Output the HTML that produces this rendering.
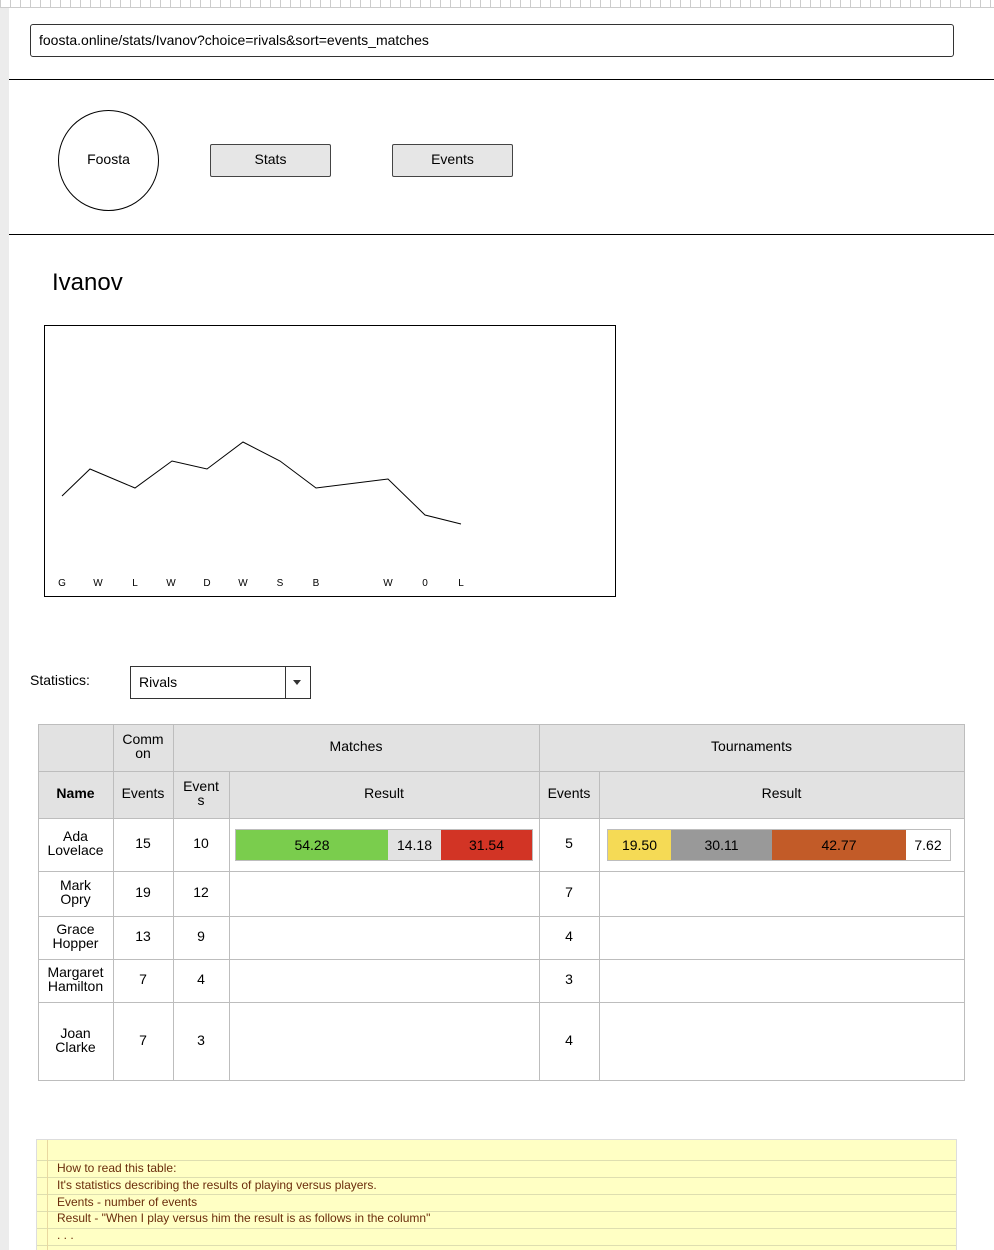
<!DOCTYPE html>
<html><head><style>
*{margin:0;padding:0;box-sizing:border-box}
body{width:994px;height:1250px;position:relative;background:#fff;font-family:"Liberation Sans",Arial,sans-serif;color:#000;overflow:hidden}
.a{position:absolute}
.c{position:absolute;display:flex;align-items:center;justify-content:center;text-align:center;font-size:14px;line-height:14px;padding-bottom:3px}
.h{background:#e2e2e2}
.vl{position:absolute;width:1px;background:#bdbdbd}
.hl{position:absolute;height:1px;background:#bdbdbd}
</style></head><body>
<div class="a" style="left:0;top:0;width:994px;height:8px;background:repeating-linear-gradient(90deg,#ccc 0 1px,#fff 1px 10px);border-bottom:1px solid #ccc"></div>
<div class="a" style="left:0;top:8px;width:9px;height:1242px;background:#ececec"></div>
<div class="a" style="left:30px;top:24px;width:924px;height:33px;border:1px solid #333;border-radius:3px;font-size:14px;padding:7px 8px">foosta.online/stats/Ivanov?choice=rivals&amp;sort=events_matches</div>
<div class="a" style="left:9px;top:79px;width:985px;height:1px;background:#000"></div>
<div class="a" style="left:9px;top:234px;width:985px;height:1px;background:#000"></div>
<div class="c" style="left:58px;top:110px;width:101px;height:101px;border:1px solid #000;border-radius:50%">Foosta</div>
<div class="c" style="left:210px;top:144px;width:121px;height:33px;border:1px solid #444;background:#e6e6e6;border-radius:2px">Stats</div>
<div class="c" style="left:392px;top:144px;width:121px;height:33px;border:1px solid #444;background:#e6e6e6;border-radius:2px">Events</div>
<div class="a" style="left:52px;top:269px;font-size:24px">Ivanov</div>
<div class="a" style="left:44px;top:325px;width:572px;height:272px;border:1px solid #000"></div>
<svg class="a" style="left:0;top:0" width="994" height="700">
<polyline points="62,496 90,469 135,488 172,461 207,469 243,442 280,461 316,488 388,479 425,515 461,524" fill="none" stroke="#000" stroke-width="1"/>
<g font-size="10" font-family="Liberation Sans" text-anchor="middle">
<text x="62" y="586">G</text><text x="98" y="586">W</text><text x="135" y="586">L</text><text x="171" y="586">W</text><text x="207" y="586">D</text><text x="243" y="586">W</text><text x="280" y="586">S</text><text x="316" y="586">B</text><text x="388" y="586">W</text><text x="425" y="586">0</text><text x="461" y="586">L</text>
</g></svg>
<div class="a" style="left:30px;top:672px;font-size:14px">Statistics:</div>
<div class="a" style="left:130px;top:666px;width:181px;height:33px;border:1px solid #333;font-size:14px;padding:7px 8px">Rivals</div>
<div class="a" style="left:285px;top:667px;width:1px;height:31px;background:#333"></div>
<div class="a" style="left:293px;top:680px;width:0;height:0;border-left:4px solid transparent;border-right:4px solid transparent;border-top:5px solid #333"></div>
<div class="a h" style="left:38px;top:724px;width:926px;height:94px"></div>
<div class="a" style="left:38px;top:724px;width:927px;height:357px;border:1px solid #bdbdbd"></div>
<div class="vl" style="left:113px;top:724px;height:357px"></div>
<div class="vl" style="left:173px;top:724px;height:357px"></div>
<div class="vl" style="left:229px;top:771px;height:310px"></div>
<div class="vl" style="left:539px;top:724px;height:357px"></div>
<div class="vl" style="left:599px;top:771px;height:310px"></div>
<div class="hl" style="left:38px;top:771px;width:926px"></div>
<div class="hl" style="left:38px;top:818px;width:926px"></div>
<div class="hl" style="left:38px;top:871px;width:926px"></div>
<div class="hl" style="left:38px;top:916px;width:926px"></div>
<div class="hl" style="left:38px;top:959px;width:926px"></div>
<div class="hl" style="left:38px;top:1002px;width:926px"></div>
<div class="c" style="left:113px;top:724px;width:60px;height:47px">Comm<br>on</div>
<div class="c" style="left:173px;top:724px;width:366px;height:47px">Matches</div>
<div class="c" style="left:539px;top:724px;width:425px;height:47px">Tournaments</div>
<div class="c" style="left:38px;top:771px;width:75px;height:47px;font-weight:bold">Name</div>
<div class="c" style="left:113px;top:771px;width:60px;height:47px">Events</div>
<div class="c" style="left:173px;top:771px;width:56px;height:47px">Event<br>s</div>
<div class="c" style="left:229px;top:771px;width:310px;height:47px">Result</div>
<div class="c" style="left:539px;top:771px;width:60px;height:47px">Events</div>
<div class="c" style="left:599px;top:771px;width:365px;height:47px">Result</div>
<div class="c" style="left:38px;top:818px;width:75px;height:53px">Ada<br>Lovelace</div>
<div class="c" style="left:113px;top:818px;width:60px;height:53px">15</div>
<div class="c" style="left:173px;top:818px;width:56px;height:53px">10</div>
<div class="c" style="left:539px;top:818px;width:60px;height:53px">5</div>
<div class="a" style="left:235px;top:829px;width:298px;height:32px;border:1px solid #bdbdbd;display:flex">
<div class="c" style="position:static;width:152px;background:#7acd4d;padding:0">54.28</div>
<div class="c" style="position:static;width:53px;background:#e2e2e2;padding:0">14.18</div>
<div class="c" style="position:static;flex:1;background:#d23425;padding:0">31.54</div></div>
<div class="a" style="left:607px;top:829px;width:344px;height:32px;border:1px solid #bdbdbd;display:flex">
<div class="c" style="position:static;width:63px;background:#f5da55;padding:0">19.50</div>
<div class="c" style="position:static;width:101px;background:#999;padding:0">30.11</div>
<div class="c" style="position:static;width:134px;background:#c25b28;padding:0">42.77</div>
<div class="c" style="position:static;flex:1;background:#fff;padding:0">7.62</div></div>
<div class="c" style="left:38px;top:871px;width:75px;height:45px">Mark<br>Opry</div>
<div class="c" style="left:113px;top:871px;width:60px;height:45px">19</div>
<div class="c" style="left:173px;top:871px;width:56px;height:45px">12</div>
<div class="c" style="left:539px;top:871px;width:60px;height:45px">7</div>
<div class="c" style="left:38px;top:916px;width:75px;height:43px">Grace<br>Hopper</div>
<div class="c" style="left:113px;top:916px;width:60px;height:43px">13</div>
<div class="c" style="left:173px;top:916px;width:56px;height:43px">9</div>
<div class="c" style="left:539px;top:916px;width:60px;height:43px">4</div>
<div class="c" style="left:38px;top:959px;width:75px;height:43px">Margaret<br>Hamilton</div>
<div class="c" style="left:113px;top:959px;width:60px;height:43px">7</div>
<div class="c" style="left:173px;top:959px;width:56px;height:43px">4</div>
<div class="c" style="left:539px;top:959px;width:60px;height:43px">3</div>
<div class="c" style="left:38px;top:1002px;width:75px;height:78px">Joan<br>Clarke</div>
<div class="c" style="left:113px;top:1002px;width:60px;height:78px">7</div>
<div class="c" style="left:173px;top:1002px;width:56px;height:78px">3</div>
<div class="c" style="left:539px;top:1002px;width:60px;height:78px">4</div>
<div class="a" style="left:36px;top:1139px;width:921px;height:111px;background:#ffffc4;border:1px solid #ddd;border-bottom:none;background-image:repeating-linear-gradient(180deg,transparent 0 16px,#dedeb0 16px 17px);background-position:0 4px"></div>
<div class="a" style="left:47px;top:1140px;width:1px;height:110px;background:#e8d8a0"></div>
<div class="a" style="left:57px;top:1160px;font-size:12px;line-height:16.8px;color:#6b2d0c">How to read this table:<br>It's statistics describing the results of playing versus players.<br>Events - number of events<br>Result - "When I play versus him the result is as follows in the column"<br>. . .</div>
</body></html>
